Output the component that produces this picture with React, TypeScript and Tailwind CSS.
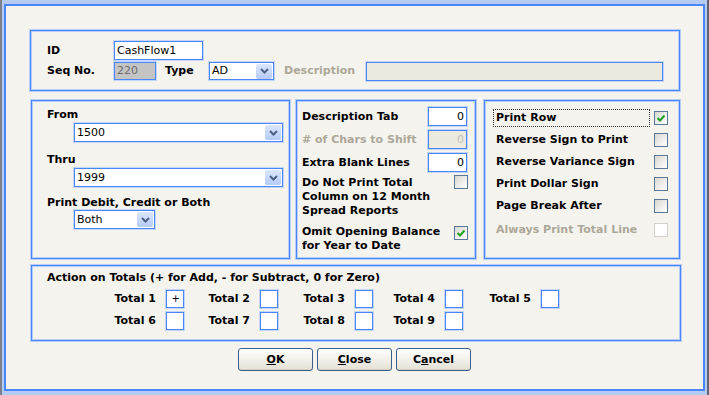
import React from "react";

type P = { className?: string; children?: React.ReactNode };

function Frame({ className = "", children }: P) {
  return (
    <div
      className={`border border-[#4a86f7] shadow-[0_0_0_1px_#b6cef9,inset_0_0_0_1px_#b6cef9] ${className}`}
    >
      {children}
    </div>
  );
}

function Field({ className = "", children }: P) {
  return (
    <div
      className={`border border-[#4a86f7] shadow-[0_0_0_1px_#c3d6fa] flex items-center px-[2px] font-normal text-[11px] leading-[14px] ${className}`}
    >
      {children}
    </div>
  );
}

function Arrow() {
  return (
    <div className="w-[16px] h-[15px] mr-[1px] rounded-[2px] bg-gradient-to-b from-[#dbe6fd] to-[#b5caf6] flex items-center justify-center">
      <svg width="9" height="6" viewBox="0 0 9 6">
        <path d="M1 1 L4.5 4.5 L8 1" fill="none" stroke="#4d6185" strokeWidth="2" />
      </svg>
    </div>
  );
}

function Select({ value, className = "" }: { value: string; className?: string }) {
  return (
    <div
      className={`bg-white border border-[#4a86f7] shadow-[0_0_0_1px_#c3d6fa] flex items-center justify-between pl-[2px] font-normal text-[11px] leading-[14px] ${className}`}
    >
      <span>{value}</span>
      <Arrow />
    </div>
  );
}

function Check({ checked = false, disabled = false }: { checked?: boolean; disabled?: boolean }) {
  return (
    <div
      className={`w-[14px] h-[14px] shrink-0 border flex items-center justify-center ${
        disabled
          ? "border-[#d2d1ca] bg-white"
          : "border-[#5a7899] bg-gradient-to-br from-[#d9d8d1] to-white"
      }`}
    >
      {checked && (
        <svg width="10" height="10" viewBox="0 0 10 10">
          <path d="M1.5 5 L4 7.5 L8.5 2.5" fill="none" stroke="#21a121" strokeWidth="2" />
        </svg>
      )}
    </div>
  );
}

function TotalCell({ label, w, value = "" }: { label: string; w: string; value?: string }) {
  return (
    <div className={`flex items-center justify-end gap-[10px] ${w}`}>
      <span className="font-bold">{label}</span>
      <div className="w-[18px] h-[18px] bg-white border border-[#4a86f7] shadow-[0_0_0_1px_#c3d6fa] flex items-center justify-end pr-[3px] font-normal text-[10px]">
        {value}
      </div>
    </div>
  );
}

function Btn({ children }: P) {
  return (
    <div className="w-[75px] h-[23px] rounded-[3px] border border-[#3b5f8c] bg-gradient-to-b from-white to-[#e4e1d5] shadow-[inset_0_-1px_0_#d6d0c0] flex items-center justify-center font-bold text-[11px]">
      {children}
    </div>
  );
}

const RIGHT_ROWS: { label: string; checked?: boolean; disabled?: boolean }[] = [
  { label: "Reverse Sign to Print" },
  { label: "Reverse Variance Sign" },
  { label: "Print Dollar Sign" },
  { label: "Page Break After" },
  { label: "Always Print Total Line", disabled: true },
];

export default function App() {
  return (
    <div className="w-[709px] h-[395px] bg-[#b4cbf4] border-l-2 border-l-[#7b808c] border-r-2 border-r-[#5f6470] px-[2px] pt-[4px] font-['DejaVu_Sans',sans-serif] text-black text-[11px] leading-[14px]">
      <div className="h-[387px] border-2 border-[#4a86f7] bg-[#f5f3ee] flex flex-col pt-[24px]">
        {/* Top group */}
        <Frame className="ml-[24px] w-[650px] h-[61px] pt-[10px] pl-[16px] font-bold">
          <div className="flex items-center h-[19px]">
            <span className="w-[67px]">ID</span>
            <Field className="w-[89px] h-[19px] bg-white">CashFlow1</Field>
          </div>
          <div className="flex items-center h-[18px] mt-[2px]">
            <span className="w-[67px]">Seq No.</span>
            <Field className="w-[42px] h-[18px] bg-[#c4c4c4] text-[#6b6b6b]">220</Field>
            <span className="ml-[9px] w-[44px]">Type</span>
            <Select value="AD" className="w-[65px] h-[18px]" />
            <span className="ml-[10px] w-[82px] text-[#aca899]">Description</span>
            <Field className="w-[297px] h-[19px] bg-[#ece9df]" />
          </div>
        </Frame>

        {/* Middle row */}
        <div className="flex mt-[9px] ml-[25px] h-[159px]">
          <Frame className="w-[259px] h-[159px] pl-[15px] font-bold flex flex-col">
            <span className="mt-[7px] h-[14px]">From</span>
            <Select value="1500" className="mt-[1px] ml-[27px] w-[209px] h-[19px]" />
            <span className="mt-[11px] h-[14px]">Thru</span>
            <Select value="1999" className="mt-[1px] ml-[27px] w-[209px] h-[19px]" />
            <span className="mt-[9px] h-[14px]">Print Debit, Credit or Both</span>
            <Select value="Both" className="ml-[27px] w-[81px] h-[19px]" />
          </Frame>

          <Frame className="ml-[6px] w-[180px] h-[159px] pl-[5px] pr-[8px] font-bold flex flex-col">
            <div className="mt-[6px] flex items-center justify-between h-[19px]">
              <span>Description Tab</span>
              <Field className="w-[39px] h-[19px] bg-white justify-end">0</Field>
            </div>
            <div className="mt-[4px] flex items-center justify-between h-[19px]">
              <span className="text-[#aca899]"># of Chars to Shift</span>
              <Field className="w-[39px] h-[19px] bg-[#ece9df] justify-end text-[#c4c1b4]">0</Field>
            </div>
            <div className="mt-[4px] flex items-center justify-between h-[19px]">
              <span>Extra Blank Lines</span>
              <Field className="w-[39px] h-[19px] bg-white justify-end">0</Field>
            </div>
            <div className="mt-[4px] flex items-start justify-between">
              <span>
                Do Not Print Total
                <br />
                Column on 12 Month
                <br />
                Spread Reports
              </span>
              <div className="-mt-[1px] -mr-[1px]">
                <Check />
              </div>
            </div>
            <div className="mt-[7px] flex items-start justify-between">
              <span>
                Omit Opening Balance
                <br />
                for Year to Date
              </span>
              <div className="mt-[1px] -mr-[1px]">
                <Check checked />
              </div>
            </div>
          </Frame>

          <Frame className="ml-[8px] w-[196px] h-[159px] pl-[8px] font-bold flex flex-col pt-[8px]">
            <div className="flex items-center h-[18px]">
              <div className="w-[157px] h-[18px] border border-dotted border-[#333] pl-[2px] flex items-center">
                Print Row
              </div>
              <div className="ml-[4px]">
                <Check checked />
              </div>
            </div>
            {RIGHT_ROWS.map((r) => (
              <div
                key={r.label}
                className={`flex items-center h-[18px] ${r.disabled ? "mt-[6px]" : "mt-[4px]"}`}
              >
                <div className={`w-[157px] pl-[3px] ${r.disabled ? "text-[#aca899]" : ""}`}>
                  {r.label}
                </div>
                <div className="ml-[4px]">
                  <Check disabled={r.disabled} />
                </div>
              </div>
            ))}
          </Frame>
        </div>

        {/* Totals */}
        <Frame className="mt-[6px] ml-[25px] w-[650px] h-[76px] flex flex-col">
          <div className="pl-[15px] pt-[5px] font-bold h-[19px]">
            Action on Totals (+ for Add, - for Subtract, 0 for Zero)
          </div>
          <div className="flex mt-[5px] h-[18px]">
            <TotalCell label="Total 1" w="w-[152px]" value="+" />
            <TotalCell label="Total 2" w="w-[94px]" />
            <TotalCell label="Total 3" w="w-[95px]" />
            <TotalCell label="Total 4" w="w-[90px]" />
            <TotalCell label="Total 5" w="w-[96px]" />
          </div>
          <div className="flex mt-[4px] h-[18px]">
            <TotalCell label="Total 6" w="w-[152px]" />
            <TotalCell label="Total 7" w="w-[94px]" />
            <TotalCell label="Total 8" w="w-[95px]" />
            <TotalCell label="Total 9" w="w-[90px]" />
          </div>
        </Frame>

        {/* Buttons */}
        <div className="mt-[7px] flex justify-center gap-[4px]">
          <Btn>
            <span className="underline">O</span>K
          </Btn>
          <Btn>
            <span className="underline">C</span>lose
          </Btn>
          <Btn>
            C<span className="underline">a</span>ncel
          </Btn>
        </div>
      </div>
    </div>
  );
}
